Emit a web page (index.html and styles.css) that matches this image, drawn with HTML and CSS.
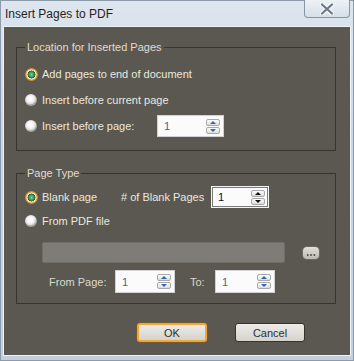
FILE: index.html
```html
<!DOCTYPE html>
<html lang="en">
<head>
  <meta charset="UTF-8">
  <title>Insert Pages to PDF</title>
  <link rel="stylesheet" href="styles.css">
</head>
<body>
  <div class="window">
    <div class="titlebar">
      <span class="title">Insert Pages to PDF</span>
      <div class="close">
        <svg width="14" height="12" viewBox="0 0 14 12">
          <path d="M2 1.5 L12 10.5 M12 1.5 L2 10.5" stroke="#f6f8fb" stroke-width="4.5" stroke-linecap="round"/>
          <path d="M2 1.5 L12 10.5 M12 1.5 L2 10.5" stroke="#6d7785" stroke-width="2.2" stroke-linecap="round"/>
        </svg>
      </div>
    </div>

    <div class="client">
      <fieldset class="group group-location">
        <legend>Location for Inserted Pages</legend>
        <div class="row">
          <span class="radio checked"></span>
          <span>Add pages to end of document</span>
        </div>
        <div class="row">
          <span class="radio"></span>
          <span>Insert before current page</span>
        </div>
        <div class="row">
          <span class="radio"></span>
          <span class="label-insert">Insert before page:</span>
          <div class="spin spin-insert">
            <span class="val">1</span>
            <span class="arrows"><i class="up"></i><i class="dn"></i></span>
          </div>
        </div>
      </fieldset>

      <fieldset class="group group-type">
        <legend>Page Type</legend>
        <div class="row row-short">
          <span class="radio checked"></span>
          <span class="label-blank">Blank page</span>
          <span class="label-count"># of Blank Pages</span>
          <div class="spin spin-count focused">
            <span class="val">1</span>
            <span class="arrows"><i class="up"></i><i class="dn"></i></span>
          </div>
        </div>
        <div class="row row-short">
          <span class="radio"></span>
          <span>From PDF file</span>
        </div>
        <div class="file-row">
          <div class="file-field"></div>
          <span class="browse">
            <svg width="16" height="12" viewBox="0 0 16 12">
              <rect x="4" y="7" width="1.5" height="2" fill="#55524c"/>
              <rect x="7.3" y="7" width="1.5" height="2" fill="#55524c"/>
              <rect x="10.6" y="7" width="1.5" height="2" fill="#55524c"/>
            </svg>
          </span>
        </div>
        <div class="range-row">
          <span class="label-from">From Page:</span>
          <div class="spin spin-range">
            <span class="val">1</span>
            <span class="arrows"><i class="up"></i><i class="dn"></i></span>
          </div>
          <span class="label-to">To:</span>
          <div class="spin spin-range">
            <span class="val">1</span>
            <span class="arrows"><i class="up"></i><i class="dn"></i></span>
          </div>
        </div>
      </fieldset>

      <div class="buttons">
        <button class="btn default">OK</button>
        <button class="btn">Cancel</button>
      </div>
    </div>
  </div>
</body>
</html>
```

FILE: styles.css
```css
/* Dialog */
* {
  box-sizing: border-box;
}

body {
  margin: 0;
  width: 354px;
  height: 361px;
  font-family: "Liberation Sans", Arial, sans-serif;
  font-size: 11px;
}

.window {
  width: 354px;
  height: 361px;
  background: linear-gradient(#dde6ef, #c9d5e2 40%, #c3cfdc);
  border: 1px solid #8e9bab;
  padding: 0 3px 5px 3px;
  display: flex;
  flex-direction: column;
}

.titlebar {
  height: 26px;
  display: flex;
  justify-content: space-between;
  align-items: flex-start;
}

.title {
  margin: 6px 0 0 1px;
  font-size: 12px;
  line-height: 14px;
  color: #2a1c1c;
}

.close {
  margin-top: -1px;
  width: 46px;
  height: 18px;
  border: 1px solid #8795a6;
  border-top: none;
  border-radius: 0 0 4px 4px;
  background: linear-gradient(#eef2f7, #d6dee8);
  display: flex;
  justify-content: center;
  align-items: center;
}

.client {
  flex: 1;
  background: #5a5850;
  padding: 0 14px 0 12px;
  box-shadow: 0 0 0 1px #eef3f8;
  color: #ebe8df;
}

/* Group boxes */
.group {
  margin: 0;
  border: 1px solid #36352f;
  min-inline-size: auto;
}

.group legend {
  padding: 0 2px;
  line-height: 14px;
  color: #e0dcd2;
}

.group-location {
  margin-top: 13px;
  padding: 7px 0 11px 8px;
}

.group-type {
  margin-top: 15px;
  padding: 5px 0 10px 8px;
}

.row {
  display: flex;
  align-items: center;
  height: 26px;
}

.row-short {
  height: 24px;
}

.radio {
  width: 12px;
  height: 12px;
  border-radius: 50%;
  margin-right: 5px;
  flex: none;
  background: radial-gradient(circle at 45% 40%, #ffffff 0, #f6f6f6 3px, #dcdcdc 5px, #a5a5a5 6px);
}

.radio.checked {
  width: 13px;
  height: 13px;
  margin-left: -0.5px;
  margin-right: 4.5px;
  background: radial-gradient(circle, #7cd495 0, #3d9f5e 2.2px, #2a7a45 3.2px, #215f37 3.8px, #ecebe6 4.2px, #ecebe6 4.8px, #e79a30 5.3px, #d98420 6.5px);
}

.label-insert {
  width: 115px;
}

.label-blank {
  width: 79px;
}

.label-count {
  width: 90px;
}

/* Spin boxes */
.spin {
  display: flex;
  align-items: center;
  justify-content: space-between;
  height: 22px;
  background: #fbfbfb;
  border: 1px solid #d2d2d2;
  padding: 0 3px 0 6px;
  color: #4f5f8f;
}

.spin-insert {
  width: 67px;
}

.spin-count {
  width: 58px;
}

.spin-range {
  width: 60px;
  height: 23px;
}

.spin.focused {
  border-color: #f4f4f4;
  box-shadow: inset 0 0 0 1px #7a7a7a;
  color: #0b0b3a;
}

.arrows {
  display: flex;
  flex-direction: column;
  gap: 1px;
}

.arrows i {
  width: 14px;
  height: 7px;
  border: 1px solid #a9a9a9;
  border-radius: 2px;
  background: linear-gradient(#fdfdfd, #dcdcdc);
  display: flex;
  justify-content: center;
  align-items: center;
}

.arrows i::after {
  content: "";
  width: 0;
  height: 0;
  border-left: 3px solid transparent;
  border-right: 3px solid transparent;
}

.arrows .up::after {
  border-bottom: 3px solid #3566b3;
}

.arrows .dn::after {
  border-top: 3px solid #3566b3;
}

.focused .arrows .up::after {
  border-bottom-color: #111;
}

.focused .arrows .dn::after {
  border-top-color: #111;
}

/* File picker */
.file-row {
  display: flex;
  align-items: center;
  margin-top: 9px;
  height: 21px;
}

.file-field {
  margin-left: 17px;
  width: 243px;
  height: 21px;
  background: #7e7c76;
  border: 1px solid #6f6d67;
  border-radius: 2px;
}

.browse {
  display: flex;
  margin-left: 18px;
  width: 16px;
  height: 12px;
  border-radius: 4px;
  background: linear-gradient(#e2dfd8, #bdb9b1);
  box-shadow: 0 0 0 1px #6c6a63;
}

.range-row {
  display: flex;
  align-items: center;
  margin-top: 7px;
  height: 23px;
  padding-left: 24px;
  color: #dcd8cc;
}

.label-from {
  width: 66px;
}

.label-to {
  margin-left: 15px;
  width: 25px;
}

/* Buttons */
.buttons {
  display: flex;
  justify-content: flex-end;
  gap: 28px;
  margin-top: 19px;
  padding-right: 31px;
}

.btn {
  width: 70px;
  height: 19px;
  padding: 0;
  font-family: inherit;
  font-size: 11px;
  color: #2e2e2e;
  background: linear-gradient(#ecebe7, #d6d3cc);
  border: 1px solid #34332e;
  border-radius: 3px;
}

.btn.default {
  border: 2px solid #f3a638;
  box-shadow: 0 0 0 1px #6e5a35;
}
```
